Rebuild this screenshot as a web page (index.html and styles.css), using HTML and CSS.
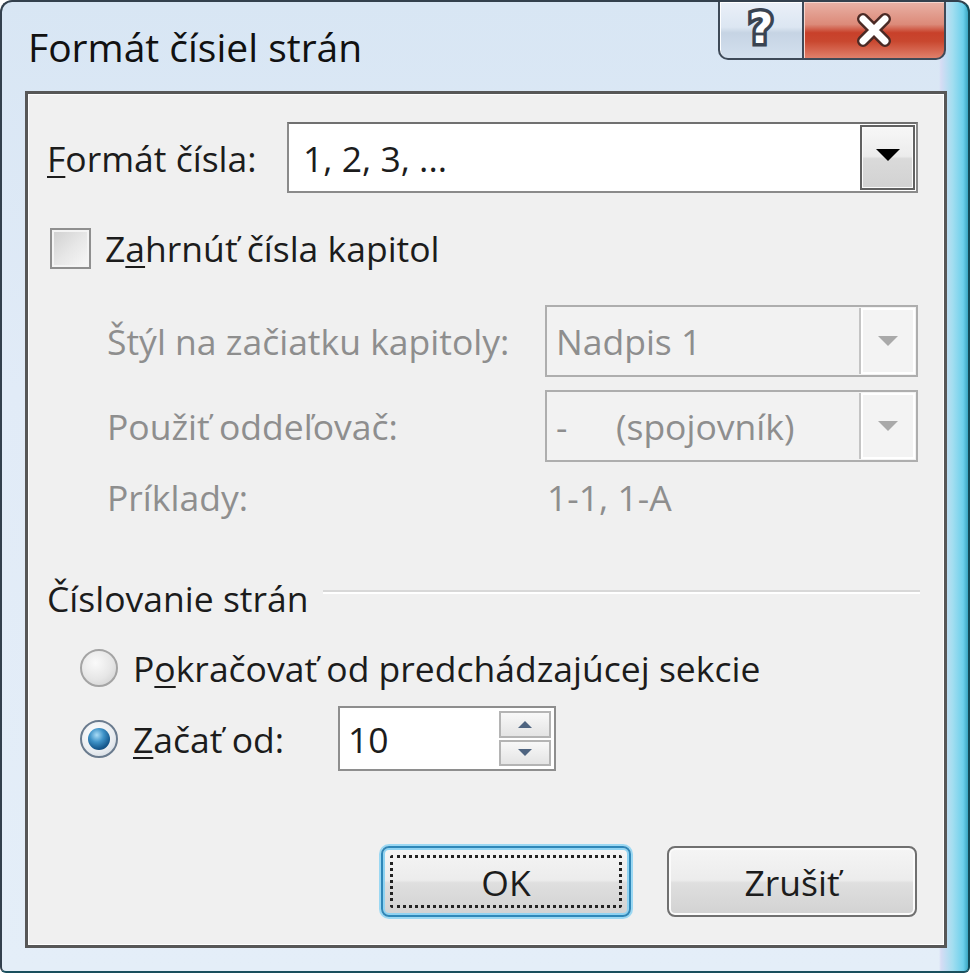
FILE: index.html
```html
<!DOCTYPE html>
<html lang="sk">
<head>
<meta charset="utf-8">
<title>Formát čísiel strán</title>
<link rel="stylesheet" href="styles.css">
</head>
<body>
<div class="window">
  <div class="titlebar">
    <div class="title">Formát čísiel strán</div>
    <div class="caption">
      <div class="cap help"><span class="qmark">?</span></div>
      <div class="cap close">
        <svg width="44" height="38" viewBox="0 0 44 38">
          <path d="M11 8 L33 30 M33 8 L11 30" stroke="#4a2a25" stroke-width="12" stroke-linecap="round" fill="none"/>
          <path d="M11 8 L33 30 M33 8 L11 30" stroke="#ffffff" stroke-width="7" stroke-linecap="round" fill="none"/>
        </svg>
      </div>
    </div>
  </div>
  <div class="client">
    <div class="row row-format">
      <span class="lbl lbl-format"><u>F</u>ormát čísla:</span>
      <div class="combo combo-main">
        <span class="combo-val">1, 2, 3, ...</span>
        <span class="drop">
          <svg width="24" height="12" viewBox="0 0 24 12"><path d="M0 0 H24 L12 12 Z" fill="#000"/></svg>
        </span>
      </div>
    </div>
    <div class="row row-check">
      <span class="checkbox"></span>
      <span class="lbl">Z<u>a</u>hrnúť čísla kapitol</span>
    </div>
    <div class="row row-sub first">
      <span class="lbl dis lbl-sub">Štýl na začiatku kapitoly:</span>
      <div class="combo combo-dis">
        <span class="combo-val">Nadpis 1</span>
        <span class="drop-dis">
          <svg width="20" height="10" viewBox="0 0 20 10"><path d="M0 0 H20 L10 10 Z" fill="#a9a9a9"/></svg>
        </span>
      </div>
    </div>
    <div class="row row-sub second">
      <span class="lbl dis lbl-sub">Použiť oddeľovač:</span>
      <div class="combo combo-dis">
        <span class="combo-val"><span class="dash">-</span>(spojovník)</span>
        <span class="drop-dis">
          <svg width="20" height="10" viewBox="0 0 20 10"><path d="M0 0 H20 L10 10 Z" fill="#a9a9a9"/></svg>
        </span>
      </div>
    </div>
    <div class="row row-example">
      <span class="lbl dis lbl-sub">Príklady:</span>
      <span class="lbl dis example">1-1, 1-A</span>
    </div>
    <div class="row section">
      <span class="lbl">Číslovanie strán</span>
      <span class="rule"></span>
    </div>
    <div class="row row-radio">
      <span class="radio"></span>
      <span class="lbl">P<u>o</u>kračovať od predchádzajúcej sekcie</span>
    </div>
    <div class="row row-start">
      <span class="radio on"><span class="dot"></span></span>
      <span class="lbl lbl-start"><u>Z</u>ačať od:</span>
      <div class="spin">
        <span class="spin-val">10</span>
        <span class="spin-btns">
          <span class="spin-btn">
            <svg width="14" height="7" viewBox="0 0 14 7"><path d="M0 7 H14 L7 0 Z" fill="#4e6480"/></svg>
          </span>
          <span class="spin-btn">
            <svg width="14" height="7" viewBox="0 0 14 7"><path d="M0 0 H14 L7 7 Z" fill="#4e6480"/></svg>
          </span>
        </span>
      </div>
    </div>
    <div class="buttons">
      <div class="btn ok"><span class="focus">OK</span></div>
      <div class="btn">Zrušiť</div>
    </div>
  </div>
</div>
</body>
</html>
```
FILE: styles.css
```css
* { box-sizing: border-box; }
html, body { margin: 0; padding: 0; background: #ffffff; }
body {
  font-family: "Open Sans", "Noto Sans", "Liberation Sans", sans-serif;
  color: #1c1c1c;
}
u { text-decoration-thickness: 2px; text-underline-offset: 4px; }

.window {
  width: 970px;
  height: 973px;
  border: 2px solid #33404d;
  border-right-color: #124c5a;
  border-bottom-color: #1a4f5d;
  border-radius: 12px 12px 6px 6px;
  background:
    linear-gradient(to right, rgba(255,255,255,0) 0, rgba(255,255,255,0) 97%, #d6dcf4 97.2%, #a3def0 98.4%, #6cd0ec 99.5%, #3aa6c2 100%),
    linear-gradient(to bottom, #d8e6f4 0, #e1ebf7 40%, #e4eef8 100%);
  display: flex;
  flex-direction: column;
  overflow: hidden;
}

.titlebar {
  height: 89px;
  display: flex;
  justify-content: space-between;
  align-items: flex-start;
  flex: none;
}
.title {
  font-size: 39px;
  line-height: 1;
  margin: 25px 0 0 26px;
  color: #111;
}
.caption {
  display: flex;
  margin-right: 22px;
}
.cap {
  height: 58px;
  border: 2px solid #3e4a58;
  border-top: none;
  display: flex;
  align-items: center;
  justify-content: center;
}
.help {
  width: 84px;
  border-right: none;
  border-radius: 0 0 0 10px;
  background: linear-gradient(to bottom, #eaf0f8 0, #dce6f2 45%, #c6d4e4 55%, #d3e0ee 100%);
  box-shadow: inset 1px 1px 0 #ffffff;
}
.qmark {
  font-family: "DejaVu Sans", sans-serif;
  font-weight: bold;
  font-size: 42px;
  line-height: 1;
  color: #ffffff;
  -webkit-text-stroke: 7px #3a4452;
  paint-order: stroke fill;
  margin-top: -2px;
}
.close {
  width: 144px;
  border-radius: 0 0 10px 0;
  background: linear-gradient(to bottom, #e9b2a6 0, #dc8a79 40%, #c8402a 55%, #c9472f 70%, #e0806b 100%);
  box-shadow: inset 1px 1px 0 #f6d5cd;
}
.close svg { display: block; }

.client {
  margin: 0 21px 0 23px;
  height: 857px;
  flex: none;
  background: #f0f0f0;
  border: 3px solid #575757;
  box-shadow: inset 1px 1px 0 #fdfdfd, inset -1px -1px 0 #ffffff;
  padding: 28px 26px 0 19px;
  display: flex;
  flex-direction: column;
}

.row {
  display: flex;
  align-items: center;
  flex: none;
}
.lbl {
  font-size: 35.5px;
  line-height: 40px;
  white-space: nowrap;
  color: #1c1c1c;
}
.lbl.dis { color: #8e8e8e; }

.lbl-format { width: 240px; }

.combo {
  display: flex;
  align-items: stretch;
  font-size: 35.5px;
}
.combo-main {
  width: 631px;
  height: 71px;
  background: #ffffff;
  border: 2px solid #8a8a8a;
  border-top-color: #707070;
  padding: 1px;
}
.combo-val {
  flex: 1;
  display: flex;
  align-items: center;
  padding-left: 13px;
  white-space: nowrap;
}
.drop {
  width: 55px;
  border: 2px solid #616161;
  background: linear-gradient(to bottom, #f7f7f7 0, #ececec 48%, #dadada 52%, #d2d2d2 100%);
  box-shadow: inset 0 0 0 1px #fafafa;
  display: flex;
  align-items: center;
  justify-content: center;
}
.drop svg { margin-top: -6px; }

.row-check { margin-top: 35px; height: 40px; }
.checkbox {
  width: 41px;
  height: 41px;
  margin: 0 14px 0 3px;
  border: 2px solid #8f8f8f;
  background: linear-gradient(135deg, #cfcfcf 0, #e6e6e6 50%, #f8f8f8 100%);
  box-shadow: inset 0 0 0 2px #f4f4f4;
  flex: none;
}

.row-sub { padding-left: 60px; }
.row-sub.first { margin-top: 37px; }
.row-sub.second { margin-top: 13px; }
.lbl-sub { width: 438px; }
.combo-dis {
  width: 373px;
  height: 72px;
  border: 2px solid #aeaeae;
  background: #f2f2f2;
  padding: 1px;
  color: #8e8e8e;
}
.combo-dis .combo-val { padding-left: 8px; }
.dash { display: inline-block; width: 60px; }
.drop-dis {
  width: 56px;
  border-left: 2px solid #c4c4c4;
  background: #f3f3f3;
  box-shadow: inset 0 0 0 2px #ffffff;
  display: flex;
  align-items: center;
  justify-content: center;
}

.row-example { padding-left: 60px; margin-top: 15px; }
.example { padding-left: 2px; }

.section { margin-top: 61px; }
.rule {
  flex: 1;
  margin: 0 -2px 12px 15px;
  border-top: 2px solid #d8d8d8;
  border-bottom: 2px solid #ffffff;
}

.row-radio { margin-top: 30px; padding-left: 33px; }
.radio {
  width: 38px;
  height: 38px;
  border-radius: 50%;
  border: 2px solid #a4a4a4;
  background: radial-gradient(circle at 40% 35%, #fafafa 0, #e6e6e6 55%, #cbcbcb 100%);
  margin-right: 15px;
  flex: none;
  display: flex;
  align-items: center;
  justify-content: center;
}
.radio.on {
  border-color: #6a7b8e;
  background: radial-gradient(circle at 40% 35%, #ffffff 0, #e8ecf0 60%, #c9d1da 100%);
}
.dot {
  width: 22px;
  height: 22px;
  border-radius: 50%;
  background: radial-gradient(circle at 40% 32%, #a9dcf7 0, #3f93c8 35%, #14578c 70%, #0a3158 100%);
}

.row-start { margin-top: 18px; padding-left: 33px; }
.lbl-start { width: 205px; }
.spin {
  width: 218px;
  height: 65px;
  background: #ffffff;
  border: 2px solid #8e8e8e;
  display: flex;
  padding: 3px 3px 3px 0;
  font-size: 35.5px;
}
.spin-val {
  flex: 1;
  display: flex;
  align-items: center;
  padding-left: 8px;
}
.spin-btns {
  width: 52px;
  display: flex;
  flex-direction: column;
  gap: 2px;
}
.spin-btn {
  flex: 1;
  border: 2px solid #b4b4b4;
  background: linear-gradient(to bottom, #f8f8f8, #e4e4e4);
  display: flex;
  align-items: center;
  justify-content: center;
}

.buttons {
  margin-top: 75px;
  display: flex;
  justify-content: flex-end;
  gap: 36px;
  padding-right: 1px;
}
.btn {
  width: 250px;
  height: 71px;
  border: 2px solid #707070;
  border-radius: 8px;
  background: linear-gradient(to bottom, #f5f5f5 0, #ececec 48%, #dfdfdf 52%, #d2d2d2 100%);
  box-shadow: inset 0 0 0 2px #fbfbfb;
  font-size: 35.5px;
  display: flex;
  align-items: center;
  justify-content: center;
  color: #1c1c1c;
}
.btn.ok {
  border-color: #2f87b8;
  box-shadow: 0 0 0 2px #9bd8f3, inset 0 0 0 2px #8fd3f2;
  padding: 7px;
  align-items: stretch;
}
.focus {
  flex: 1;
  border: 3px dotted #222;
  border-radius: 3px;
  display: flex;
  align-items: center;
  justify-content: center;
}
```
